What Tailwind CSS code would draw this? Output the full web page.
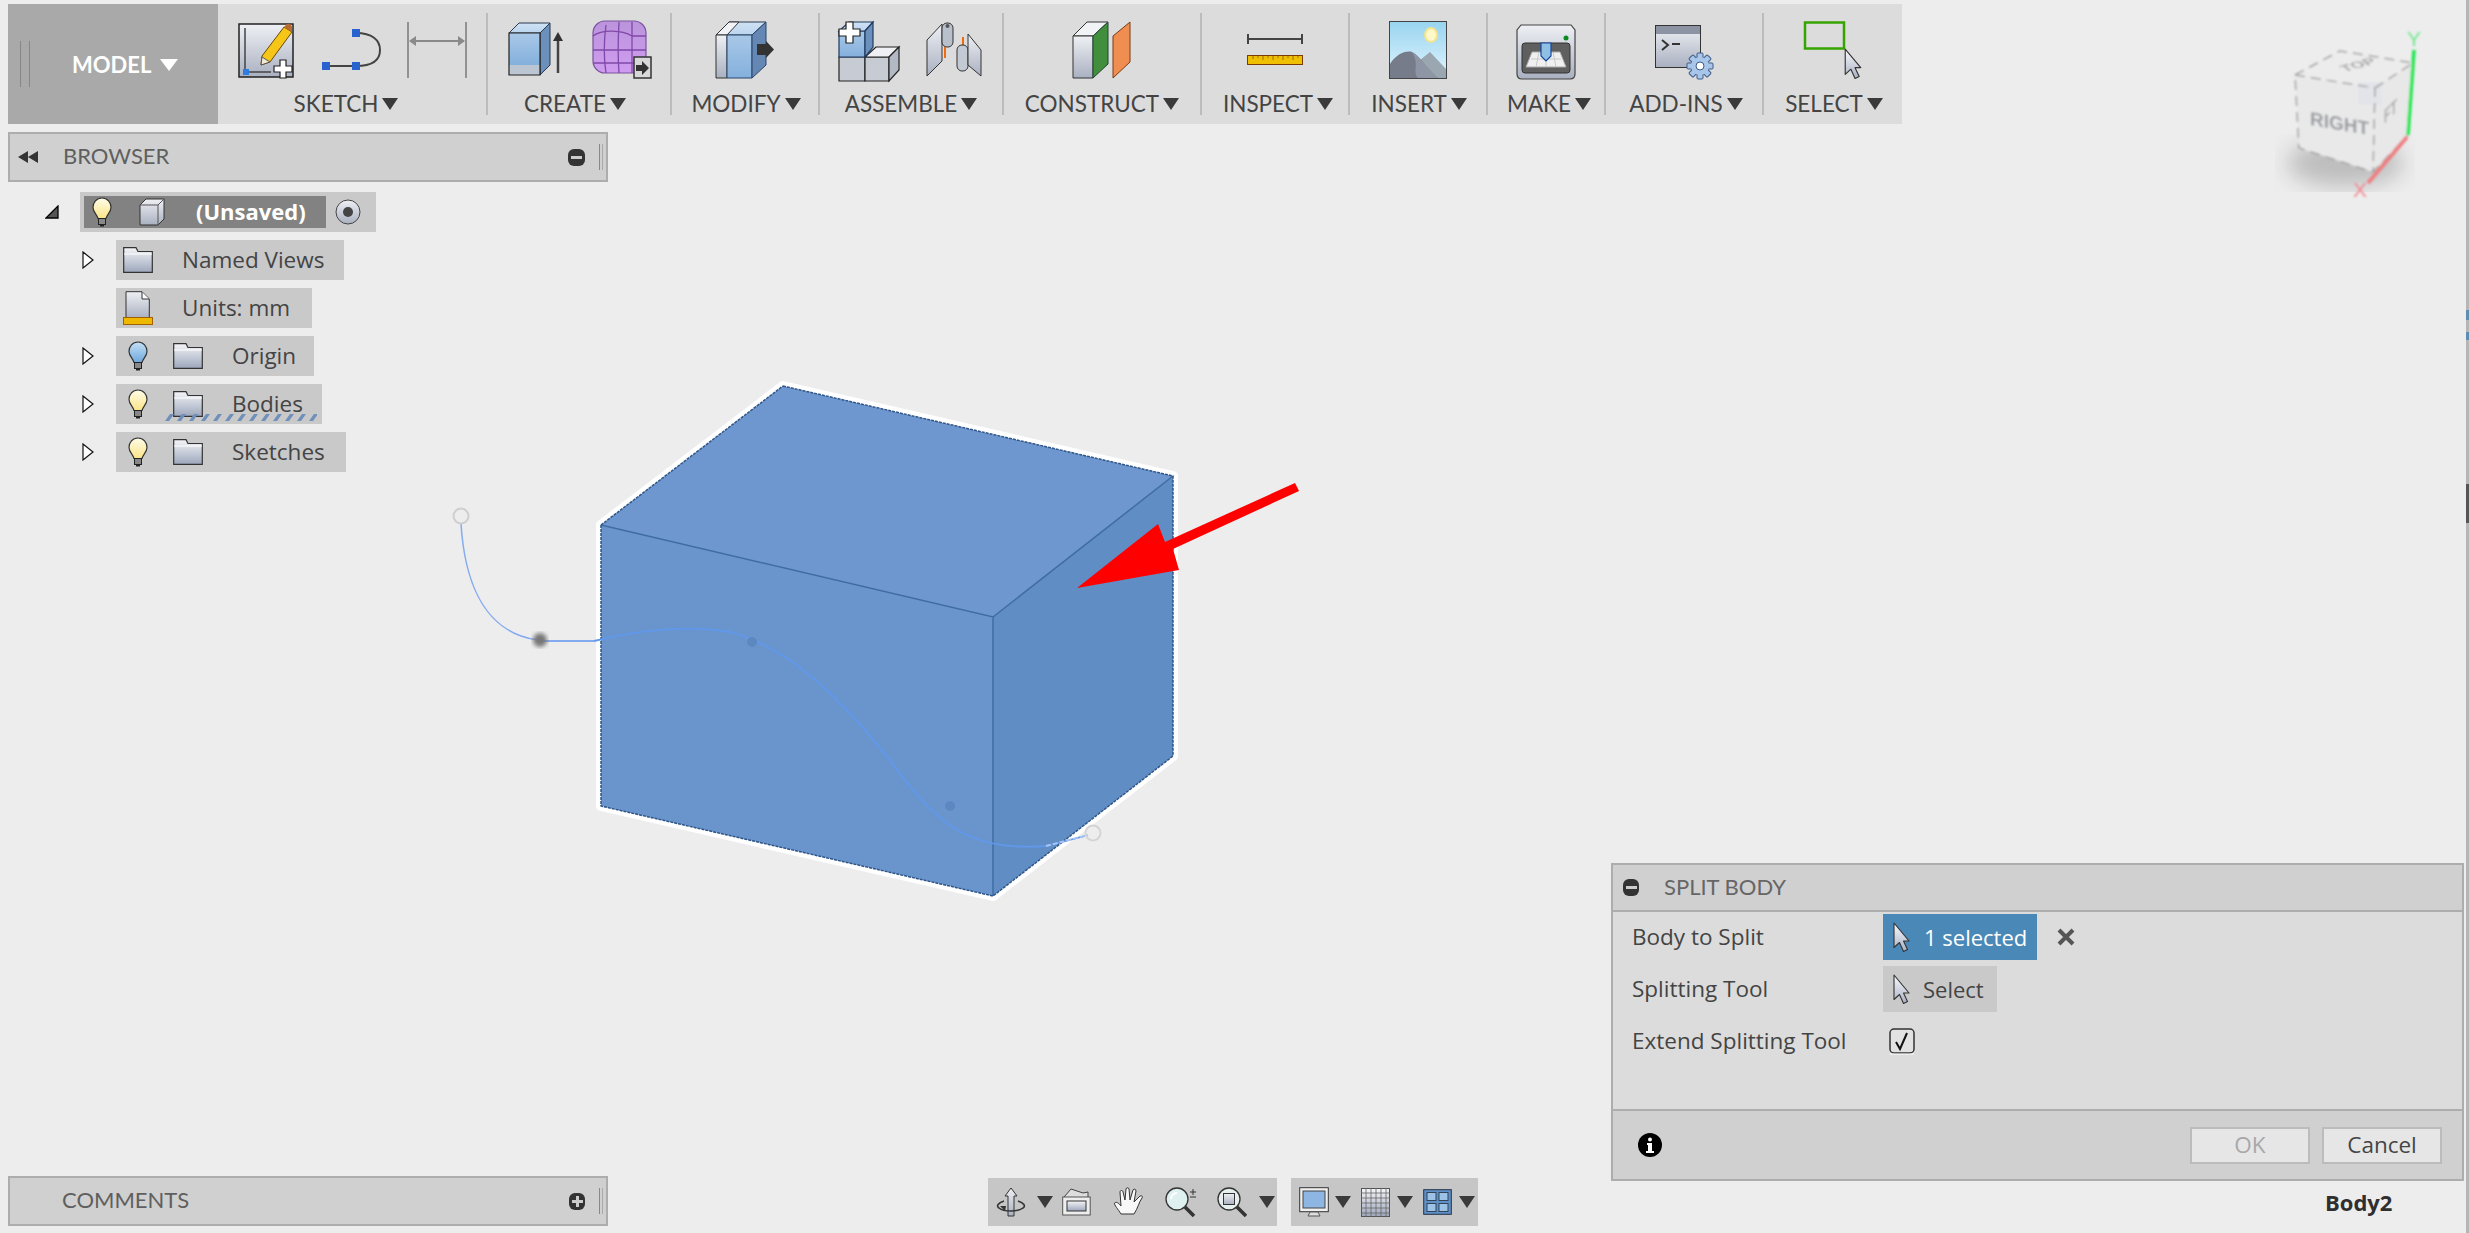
<!doctype html>
<html lang="en">
<head>
  <meta charset="UTF-8" />
  <script src="https://cdn.jsdelivr.net/npm/@tailwindcss/browser@4"></script>
  <title>Split Body</title>
</head>
<body class="relative flex flex-col w-[2469px] h-[1233px] overflow-hidden bg-[#ededed] pl-2 pt-1 pb-[7px] [font-family:Lato,sans-serif] text-[22px] text-[#444]">

  <!-- shared gradients and icons -->
  <svg class="absolute w-0 h-0">
    <defs>
      <linearGradient id="gBlue" x1="0" y1="0" x2="0" y2="1"><stop offset="0" stop-color="#a9c8e8"/><stop offset="1" stop-color="#84b0dc"/></linearGradient>
      <linearGradient id="gBlueTop" x1="0" y1="0" x2="0" y2="1"><stop offset="0" stop-color="#cfe2f5"/><stop offset="1" stop-color="#bcd5ee"/></linearGradient>
      <linearGradient id="gSteel" x1="0" y1="0" x2="0" y2="1"><stop offset="0" stop-color="#eef0f4"/><stop offset="1" stop-color="#a9b0c0"/></linearGradient>
      <linearGradient id="gFolder" x1="0" y1="0" x2="0" y2="1"><stop offset="0" stop-color="#f4f5f7"/><stop offset="1" stop-color="#9da7bc"/></linearGradient>
      <linearGradient id="gPurple" x1="0" y1="0" x2="0" y2="1"><stop offset="0" stop-color="#bb94dc"/><stop offset="1" stop-color="#cf9cf0"/></linearGradient>
      <linearGradient id="gSky" x1="0" y1="0" x2="0" y2="1"><stop offset="0" stop-color="#98d4ef"/><stop offset="1" stop-color="#e2f5fe"/></linearGradient>
      <linearGradient id="gBulbY" x1="0" y1="0" x2="0" y2="1"><stop offset="0" stop-color="#fffde8"/><stop offset="1" stop-color="#fbe488"/></linearGradient>
      <linearGradient id="gBulbB" x1="0" y1="0" x2="0" y2="1"><stop offset="0" stop-color="#c4e0f6"/><stop offset="1" stop-color="#6fa8dc"/></linearGradient>
      <linearGradient id="gCursor" x1="0" y1="0" x2="0" y2="1"><stop offset="0" stop-color="#fafbfd"/><stop offset="1" stop-color="#a8b0c4"/></linearGradient>
      <pattern id="wavy" width="12" height="10" patternUnits="userSpaceOnUse"><path d="M0 9 L5 2 L9 2 L4 9 Z" fill="#6f8fbb"/></pattern>
      <symbol id="tri" viewBox="0 0 16 12"><path d="M0 0H16L8 12Z" fill="#3a3a3a"/></symbol>
      <symbol id="arrow" viewBox="0 0 12 18"><path d="M1 1 L11 9 L1 17Z" fill="#fff" stroke="#111" stroke-width="1.2"/></symbol>
      <symbol id="bulbY" viewBox="0 0 20 30"><path d="M10 1C4.500 1 1 5.500 1 10.500C1 15 5 17.500 6 21.500H14C15 17.500 19 15 19 10.500C19 5.500 15.500 1 10 1Z" fill="url(#gBulbY)" stroke="#333" stroke-width="1.200"/><rect x="6.500" y="21.500" width="7" height="6" fill="#888" stroke="#222"/><rect x="8" y="27" width="4" height="2.500" fill="#222"/></symbol>
      <symbol id="bulbB" viewBox="0 0 20 30"><path d="M10 1C4.500 1 1 5.500 1 10.500C1 15 5 17.500 6 21.500H14C15 17.500 19 15 19 10.500C19 5.500 15.500 1 10 1Z" fill="url(#gBulbB)" stroke="#333" stroke-width="1.200"/><rect x="6.500" y="21.500" width="7" height="6" fill="#888" stroke="#222"/><rect x="8" y="27" width="4" height="2.500" fill="#222"/></symbol>
      <symbol id="folder" viewBox="0 0 30 26"><path d="M.7 25.300V.7H13L15 4.500H29.300V25.300Z" fill="url(#gFolder)" stroke="#333" stroke-width="1.200"/><path d="M1 7H29" stroke="#fff" stroke-width="1"/></symbol>
      <symbol id="cursor" viewBox="0 0 18 30"><path d="M1 1 L16 19 L10.500 19 L14.500 27.500 L10.500 29.500 L6.500 20.500 L1 25.500 Z" fill="url(#gCursor)" stroke="#333" stroke-width="1.100" stroke-linejoin="round"/></symbol>
    </defs>
  </svg>

  <!-- the model, sketch spline, annotation arrow and view cube on the canvas -->
  <svg class="absolute left-0 top-0" width="2469" height="1233" viewBox="0 0 2469 1233">
    <defs>
      <filter id="b05"><feGaussianBlur stdDeviation="0.500"/></filter>
      <filter id="b1"><feGaussianBlur stdDeviation="0.900"/></filter>
      <filter id="b8"><feGaussianBlur stdDeviation="11"/></filter>
      <filter id="b2"><feGaussianBlur stdDeviation="2"/></filter>
    </defs>
    <g filter="url(#b05)">
      <path d="M461 524C464 570 478 632 538 640" fill="none" stroke="#84aaf0" stroke-width="1.500"/>
      <path d="M538 641H594" fill="none" stroke="#84aaf0" stroke-width="2"/>
      <circle cx="461" cy="516" r="7.500" fill="none" stroke="#cfcfcf" stroke-width="2"/>
      <path d="M601 525L783 386L1173 476V756L993 896L601 806Z" fill="#6c96cd" stroke="#fff" stroke-width="10" stroke-linejoin="round"/>
      <path d="M601 525L783 386L1173 476L993 617Z" fill="#6d97ce"/>
      <path d="M601 525L993 617V896L601 806Z" fill="#6b95cc"/>
      <path d="M993 617L1173 476V756L993 896Z" fill="#608dc4"/>
      <path d="M601 525L993 617L1173 476M993 617V896" fill="none" stroke="#3f6ca3" stroke-width="1.500"/>
      <path d="M783 386L1173 476V756M601 525V806L993 896L1173 756M601 525L783 386" fill="none" stroke="#2f5688" stroke-width="1.500" stroke-dasharray="3 1"/>
      <path d="M594 641C640 630 690 625 730 632C800 650 860 720 905 780C950 840 990 850 1046 846L1085 836" fill="none" stroke="#6098ec" stroke-width="1.800"/>
      <path d="M1046 846L1088 835" fill="none" stroke="#a8c4f4" stroke-width="2" stroke-dasharray="5 2"/>
      <circle cx="752" cy="642" r="5" fill="#5c88c2"/>
      <circle cx="950" cy="806" r="5" fill="#5c88c2"/>
      <circle cx="1093" cy="833" r="7.500" fill="none" stroke="#d4d4d4" stroke-width="2"/>
    </g>
    <circle cx="540" cy="640" r="7" fill="#777" filter="url(#b2)"/>
    <path d="M1295 483L1299 491L1173 549L1179 570L1077 588L1158 524L1165 542Z" fill="#ff0000"/>

    <ellipse cx="2345" cy="163" rx="58" ry="24" fill="#000" fill-opacity="0.200" filter="url(#b8)"/>
    <g filter="url(#b1)">
      <path d="M2295 75L2340 51L2413 63L2375 88Z" fill="#ececec"/>
      <path d="M2295 75L2375 88L2373 172L2299 148Z" fill="#e9e9e9"/>
      <path d="M2375 88L2413 63L2408 135L2373 172Z" fill="#e8e8e8"/>
      <rect x="2358" y="82" width="24" height="23" fill="#e3e4ea"/>
      <path d="M2295 75L2340 51L2413 63L2408 135L2373 172L2299 148ZM2295 75L2375 88L2373 172M2375 88L2413 63" fill="none" stroke="#a2a2a2" stroke-width="1.500" stroke-dasharray="10 6"/>
      <text transform="matrix(1 .17 0 1 2310 125)" font-size="19" font-weight="700" fill="#9a9ca2" font-family="Liberation Sans">RIGHT</text>
      <text transform="matrix(.55 -.55 0 1 2384 124)" font-size="19" font-weight="700" fill="#a8a8a8" font-family="Liberation Sans">FT</text>
      <text transform="matrix(1 -.28 .6 .5 2345 72)" font-size="16" font-weight="700" fill="#a8a8a8" font-family="Liberation Sans">TOP</text>
      <path d="M2414 50L2408 135" stroke="#1fe64e" stroke-width="3.500"/>
      <path d="M2407 137L2368 183" stroke="#ef7f82" stroke-width="4"/>
      <text x="2407" y="46" font-size="21" fill="#6fe88e" font-family="Liberation Sans">Y</text>
      <text x="2353" y="197" font-size="21" fill="#f38a92" font-family="Liberation Sans">X</text>
    </g>
  </svg>

  <!-- window edge behind the page -->
  <div class="absolute right-0 top-0 flex flex-col w-[3px] h-full bg-[#b6b6b6]">
    <div class="h-[310px]"></div>
    <div class="h-[10px] bg-[#5f8fb0]"></div>
    <div class="h-[12px]"></div>
    <div class="h-[8px] bg-[#5f8fb0]"></div>
    <div class="h-[144px]"></div>
    <div class="h-[39px] bg-[#555]"></div>
  </div>

  <!-- ribbon -->
  <div class="relative flex items-center w-[1894px] h-[120px] shrink-0 bg-[#dcdcdc] text-[22.5px]">
    <div class="flex items-center w-[210px] h-full bg-[#a9a9a9] pl-3 text-[22px]">
      <div class="w-px h-[46px] bg-[#868686]"></div>
      <div class="w-px h-[46px] ml-2 bg-[#868686]"></div>
      <span class="ml-[42px] font-bold text-white">MODEL</span>
      <svg class="ml-[9px] mt-[2px]" width="18" height="12" viewBox="0 0 18 12"><path d="M0 0H18L9 12Z" fill="#fff"/></svg>
    </div>

    <!-- SKETCH -->
    <div class="flex flex-col items-center w-[268px] h-full pt-4">
      <div class="flex gap-[25px] h-[60px]">
        <svg width="60" height="60" viewBox="0 0 60 60">
          <path d="M2 4H56V57H2Z" fill="url(#gSteel)" stroke="#222" stroke-width="1.500"/>
          <path d="M8 8V52H34" fill="none" stroke="#444" stroke-width="1.500"/>
          <rect x="6" y="49" width="6" height="6" fill="#2e7de0"/>
          <path d="M25 36L47 7L55 12L33 42L24 45Z" fill="#f5c518" stroke="#6b4a00"/>
          <path d="M47 7L50 4C53 3 56 6 55 9L55 12Z" fill="#b86a30"/>
          <path d="M25 37L33 42L24 45Z" fill="#f3e8d0" stroke="#555"/>
          <path d="M43 43H49V49H55V55H49V61H43V55H37V49H43Z" fill="#fff" stroke="#222" stroke-width="1.200" transform="translate(0 -3)"/>
        </svg>
        <svg width="60" height="60" viewBox="0 0 60 60">
          <path d="M34 13C50 13 58 20 58 30C58 40 50 46 34 46H4" fill="none" stroke="#444" stroke-width="2"/>
          <rect x="30" y="9" width="8" height="8" fill="#2762ce"/><rect x="30" y="42" width="8" height="8" fill="#2762ce"/><rect x="0" y="42" width="8" height="8" fill="#2762ce"/>
        </svg>
        <svg width="60" height="60" viewBox="0 0 60 60">
          <path d="M1 2V58M59 2V58" stroke="#8a8a8a" stroke-width="1.800"/>
          <path d="M3 21H57" stroke="#8a8a8a" stroke-width="2"/>
          <path d="M2 21L9 16V26ZM58 21L51 16V26Z" fill="#8a8a8a"/>
        </svg>
      </div>
      <div class="flex items-center gap-1 mt-3 mr-3 h-6"><span>SKETCH</span><svg width="16" height="12"><use href="#tri"/></svg></div>
    </div>
    <div class="w-[2px] h-[102px] bg-[#bcbcbc]"></div>

    <!-- CREATE -->
    <div class="flex flex-col items-center w-[182px] h-full pt-4">
      <div class="flex gap-[25px] h-[60px]">
        <svg width="60" height="60" viewBox="0 0 60 60">
          <path d="M2 13L12 3H43L33 13Z" fill="url(#gBlueTop)" stroke="#2a3a50" stroke-width="1"/>
          <path d="M33 13L43 3V45L33 55Z" fill="#6c90bc" stroke="#2a3a50" stroke-width="1"/>
          <path d="M2 13H33V45H2Z" fill="url(#gBlue)"/>
          <path d="M2 45H33V55H2Z" fill="#bcc5d2"/>
          <path d="M2 13H33V55H2Z" fill="none" stroke="#222" stroke-width="1.200"/>
          <path d="M51 53V20" stroke="#444" stroke-width="2.500"/><path d="M51 12L56 21H46Z" fill="#333"/>
        </svg>
        <svg width="60" height="60" viewBox="0 0 60 60">
          <rect x="1" y="1" width="53" height="52" rx="12" fill="url(#gPurple)" stroke="#7a52a0" stroke-width="1.200"/>
          <path d="M1 16C10 9 30 10 40 16H54M1 30H54M1 43H54M14 5C12 20 12 40 14 53M27 2C26 20 26 40 27 53M40 2V53" fill="none" stroke="#8048a8" stroke-width="1.300"/>
          <rect x="42" y="37" width="17" height="21" fill="#d8d8d8" stroke="#333" stroke-width="1.500"/>
          <path d="M44 45H50V41L57 48L50 55V51H44Z" fill="#333"/>
        </svg>
      </div>
      <div class="flex items-center gap-1 mt-3 mr-2 h-6"><span>CREATE</span><svg width="16" height="12"><use href="#tri"/></svg></div>
    </div>
    <div class="w-[2px] h-[102px] bg-[#bcbcbc]"></div>

    <!-- MODIFY -->
    <div class="flex flex-col items-center w-[146px] h-full pt-4">
      <svg width="60" height="60" viewBox="0 0 60 60">
        <path d="M1 15L14 2H51L37 15Z" fill="url(#gBlueTop)" stroke="#2a3a50" stroke-width="1"/>
        <path d="M1 15L14 2H24L12 15Z" fill="#f2f3f6" stroke="#333" stroke-width="1"/>
        <path d="M1 15H12V58H1Z" fill="url(#gSteel)" stroke="#333" stroke-width="1"/>
        <path d="M12 15H37V58H12Z" fill="url(#gBlue)" stroke="#27456c" stroke-width="1"/>
        <path d="M37 15L51 2V45L37 58Z" fill="#6487b4" stroke="#27456c" stroke-width="1"/>
        <path d="M42 24H51V21L59 29.500L51 38V35H42Z" fill="#333"/>
      </svg>
      <div class="flex items-center gap-1 mt-3 ml-[2px] h-6"><span>MODIFY</span><svg width="16" height="12"><use href="#tri"/></svg></div>
    </div>
    <div class="w-[2px] h-[102px] bg-[#bcbcbc]"></div>

    <!-- ASSEMBLE -->
    <div class="flex flex-col items-center w-[182px] h-full pt-4">
      <div class="flex gap-[27px] h-[60px]">
        <svg class="overflow-visible" width="60" height="60" viewBox="0 0 60 60">
          <path d="M1 37H27V61H1Z" fill="#c7ccd4" stroke="#222" stroke-width="1.200"/>
          <path d="M27 37H51V61H27Z" fill="#c7ccd4" stroke="#222" stroke-width="1.200"/>
          <path d="M27 37L38 27H61L51 37Z" fill="#eef0f4" stroke="#222" stroke-width="1.200"/>
          <path d="M51 37L61 27V50L51 61Z" fill="#b3b9c4" stroke="#222" stroke-width="1.200"/>
          <path d="M1 11H27V37H1Z" fill="url(#gBlue)" stroke="#1f3a5f" stroke-width="1.200"/>
          <path d="M1 11L11 2H35L27 11Z" fill="url(#gBlueTop)" stroke="#1f3a5f" stroke-width="1.200"/>
          <path d="M27 11L35 2V27L27 37Z" fill="#6c90bc" stroke="#1f3a5f" stroke-width="1.200"/>
          <path d="M8 2H15V9H22V16H15V23H8V16H1V9H8Z" fill="#fff" stroke="#222" stroke-width="1.200"/>
        </svg>
        <svg width="60" height="60" viewBox="0 0 60 60">
          <path d="M2 20L17 4V41L2 56Z" fill="url(#gSteel)" stroke="#333"/>
          <rect x="17" y="3" width="11" height="24" rx="5" fill="#b8c0cc" stroke="#333"/><circle cx="22.500" cy="6" r="2" fill="#555"/>
          <path d="M20 27V38" stroke="#f06a10" stroke-width="2"/>
          <path d="M38 17V32" stroke="#f06a10" stroke-width="2"/>
          <rect x="32" y="25" width="11" height="26" rx="5" fill="#c4cad4" stroke="#333"/>
          <path d="M43 14L56 30V56L43 45Z" fill="url(#gSteel)" stroke="#333"/>
        </svg>
      </div>
      <div class="flex items-center gap-1 mt-3 h-6"><span>ASSEMBLE</span><svg width="16" height="12"><use href="#tri"/></svg></div>
    </div>
    <div class="w-[2px] h-[102px] bg-[#bcbcbc]"></div>

    <!-- CONSTRUCT -->
    <div class="flex flex-col items-center w-[196px] h-full pt-4">
      <svg width="60" height="60" viewBox="0 0 60 60">
        <path d="M1 16L15 2H36L21 16Z" fill="#f2f3f6" stroke="#333"/>
        <path d="M1 16H21V58H1Z" fill="url(#gSteel)" stroke="#333"/>
        <path d="M21 16L36 2V44L21 58Z" fill="#418f3c" stroke="#243"/>
        <path d="M41 16L58 2V42L41 58Z" fill="#ef8e50" stroke="#7a3c10"/>
      </svg>
      <div class="flex items-center gap-1 mt-3 h-6"><span>CONSTRUCT</span><svg width="16" height="12"><use href="#tri"/></svg></div>
    </div>
    <div class="w-[2px] h-[102px] bg-[#bcbcbc]"></div>

    <!-- INSPECT -->
    <div class="flex flex-col items-center w-[146px] h-full pt-4">
      <svg width="60" height="60" viewBox="0 0 60 60">
        <path d="M3 19H57M3 14V24M57 14V24" fill="none" stroke="#444" stroke-width="2"/>
        <rect x="2.500" y="35.500" width="55" height="9" fill="#efc000" stroke="#7a3c00"/>
        <path d="M8 36V39M13 36V38M18 36V40M23 36V38M28 36V40M33 36V38M38 36V40M43 36V38M48 36V40M53 36V38" stroke="#a07000"/>
      </svg>
      <div class="flex items-center gap-1 mt-3 ml-[6px] h-6"><span>INSPECT</span><svg width="16" height="12"><use href="#tri"/></svg></div>
    </div>
    <div class="w-[2px] h-[102px] bg-[#bcbcbc]"></div>

    <!-- INSERT -->
    <div class="flex flex-col items-center w-[136px] h-full pt-4">
      <svg width="60" height="60" viewBox="0 0 60 60">
        <rect x="1.500" y="1.500" width="57" height="57" fill="url(#gSky)" stroke="#444"/>
        <ellipse cx="43" cy="15" rx="6" ry="7" fill="#fff8c8" stroke="#f4e48c" stroke-width="2"/>
        <path d="M32 40L42 32L58 49V58H36Z" fill="#9aa6b0"/>
        <path d="M2 44C8 34 18 30 24 32C32 36 38 48 50 58H2Z" fill="#777c8a"/>
        <path d="M24 32C32 36 38 48 50 58H30C24 52 32 44 24 32Z" fill="#8e96a6"/>
      </svg>
      <div class="flex items-center gap-1 mt-3 ml-[2px] h-6"><span>INSERT</span><svg width="16" height="12"><use href="#tri"/></svg></div>
    </div>
    <div class="w-[2px] h-[102px] bg-[#bcbcbc]"></div>

    <!-- MAKE -->
    <div class="flex flex-col items-center w-[116px] h-full pt-4">
      <svg width="60" height="60" viewBox="0 0 60 60">
        <path d="M5 5H55L59 10V54C59 57 57 59 54 59H6C3 59 1 57 1 54V10Z" fill="url(#gSteel)" stroke="#444" stroke-width="1.200"/>
        <rect x="6" y="23" width="48" height="30" rx="3" fill="#5f5f5f" stroke="#333"/>
        <path d="M16 32H44L50 47H10Z" fill="#f0f0f0" stroke="#aaa"/>
        <path d="M15 39H45M23 32L20 47M30 32V47M37 32L40 47" stroke="#c8c8c8"/>
        <path d="M25 23H35V36L30 41L25 36Z" fill="#8fc0e4" stroke="#1446a0" stroke-width="1.200"/>
        <circle cx="50" cy="18" r="2.500" fill="#0a8a20"/>
      </svg>
      <div class="flex items-center gap-1 mt-3 ml-[6px] h-6"><span>MAKE</span><svg width="16" height="12"><use href="#tri"/></svg></div>
    </div>
    <div class="w-[2px] h-[102px] bg-[#bcbcbc]"></div>

    <!-- ADD-INS -->
    <div class="flex flex-col items-center w-[156px] h-full pt-4">
      <svg width="60" height="60" viewBox="0 0 60 60">
        <rect x="1.500" y="5.500" width="45" height="42" fill="url(#gSteel)" stroke="#333"/>
        <rect x="2" y="6" width="44" height="8" fill="#8c93a3"/>
        <path d="M8 20L14 25L8 30" fill="none" stroke="#333" stroke-width="2"/>
        <path d="M18 24H26" stroke="#333" stroke-width="2"/>
        <g transform="translate(46 46)">
          <g fill="#a8c6ea" stroke="#3c5a88">
            <rect x="-3" y="-13" width="6" height="26" rx="1"/>
            <rect x="-3" y="-13" width="6" height="26" rx="1" transform="rotate(45)"/>
            <rect x="-3" y="-13" width="6" height="26" rx="1" transform="rotate(90)"/>
            <rect x="-3" y="-13" width="6" height="26" rx="1" transform="rotate(135)"/>
          </g>
          <circle r="9" fill="#a8c6ea"/>
          <circle r="4" fill="#fff" stroke="#3c5a88"/>
        </g>
      </svg>
      <div class="flex items-center gap-1 mt-3 ml-[4px] h-6"><span>ADD-INS</span><svg width="16" height="12"><use href="#tri"/></svg></div>
    </div>
    <div class="w-[2px] h-[102px] bg-[#bcbcbc]"></div>

    <!-- SELECT -->
    <div class="flex flex-col items-center w-[138px] h-full pt-4">
      <svg width="60" height="60" viewBox="0 0 60 60">
        <rect x="2" y="2.500" width="39" height="26" fill="none" stroke="#36a400" stroke-width="2.500"/>
        <use href="#cursor" x="41" y="28" width="19" height="31"/>
      </svg>
      <div class="flex items-center gap-1 mt-3 ml-[2px] h-6"><span>SELECT</span><svg width="16" height="12"><use href="#tri"/></svg></div>
    </div>
  </div>

  <!-- browser panel -->
  <div class="relative flex items-center w-[600px] h-[50px] mt-2 shrink-0 bg-[#d0d0d0] border-2 border-[#adadad] text-[#5f5f5f]">
    <svg class="ml-[8px]" width="20" height="12" viewBox="0 0 20 12"><path d="M10 0V12L0 6ZM20 0V12L10 6Z" fill="#333"/></svg>
    <span class="ml-[25px] mb-[3px]">BROWSER</span>
    <div class="ml-auto flex items-center justify-center w-[17px] h-[17px] rounded-[6px] bg-[#333]"><div class="w-[11px] h-[3px] bg-[#ccc]"></div></div>
    <div class="ml-[14px] mr-[3px] flex gap-[2px]"><div class="w-px h-[26px] bg-[#888]"></div><div class="w-px h-[26px] bg-[#aaa]"></div></div>
  </div>

  <!-- component tree -->
  <div class="relative flex flex-col gap-2 mt-[10px] shrink-0 [font-family:Open_Sans,sans-serif] text-[22.5px]">
    <div class="flex items-center h-10">
      <svg class="ml-[37px]" width="14" height="14" viewBox="0 0 14 14"><path d="M1 13L13 1V13Z" fill="#555" stroke="#000" stroke-width="1.300"/></svg>
      <div class="flex items-center w-[296px] h-10 ml-[21px] pl-1 bg-[#c9c9c9]">
        <div class="flex items-center w-[242px] h-8 pl-2 bg-[#828282]">
          <svg width="20" height="30"><use href="#bulbY" width="20" height="30"/></svg>
          <svg class="ml-[27px]" width="26" height="28" viewBox="0 0 26 28"><path d="M1 7L7 1H25V21L19 27H1Z" fill="url(#gSteel)" stroke="#333"/><path d="M1 7H19V27M19 7L25 1" fill="none" stroke="#555"/></svg>
          <span class="ml-[31px] mb-[2px] font-bold text-[22px] text-white">(Unsaved)</span>
        </div>
        <svg class="ml-[9px]" width="26" height="26" viewBox="0 0 26 26"><circle cx="13" cy="13" r="12" fill="url(#gSteel)" stroke="#444"/><circle cx="13" cy="13" r="5" fill="#444"/></svg>
      </div>
    </div>

    <div class="flex items-center h-10 ml-[74px]">
      <svg width="12" height="18"><use href="#arrow" width="12" height="18"/></svg>
      <div class="flex items-center w-[228px] h-10 ml-[22px] pl-[7px] bg-[#c9c9c9]">
        <svg width="30" height="26"><use href="#folder" width="30" height="26"/></svg>
        <span class="ml-[29px] mb-px">Named Views</span>
      </div>
    </div>

    <div class="flex items-center h-10 ml-[74px]">
      <div class="w-[12px]"></div>
      <div class="flex items-center w-[196px] h-10 ml-[22px] pl-[7px] bg-[#c9c9c9]">
        <svg width="30" height="34" viewBox="0 0 30 34"><path d="M3 .7H19L26.300 8V27H3Z" fill="url(#gSteel)" stroke="#333"/><path d="M19 1V8H26" fill="#fff" stroke="#333"/><rect x=".5" y="26.500" width="29" height="7" fill="#efb800" stroke="#a06000"/></svg>
        <span class="ml-[29px] mb-px">Units: mm</span>
      </div>
    </div>

    <div class="flex items-center h-10 ml-[74px]">
      <svg width="12" height="18"><use href="#arrow" width="12" height="18"/></svg>
      <div class="flex items-center w-[198px] h-10 ml-[22px] pl-3 bg-[#c9c9c9]">
        <svg width="20" height="30"><use href="#bulbB" width="20" height="30"/></svg>
        <svg class="ml-[25px]" width="30" height="26"><use href="#folder" width="30" height="26"/></svg>
        <span class="ml-[29px] mb-px">Origin</span>
      </div>
    </div>

    <div class="relative flex items-center h-10 ml-[74px]">
      <svg width="12" height="18"><use href="#arrow" width="12" height="18"/></svg>
      <div class="flex items-center w-[206px] h-10 ml-[22px] pl-3 bg-[#c9c9c9]">
        <svg width="20" height="30"><use href="#bulbY" width="20" height="30"/></svg>
        <svg class="ml-[25px]" width="30" height="26"><use href="#folder" width="30" height="26"/></svg>
        <span class="ml-[29px] mb-px">Bodies</span>
      </div>
      <svg class="absolute left-[83px] top-[28px]" width="152" height="10"><rect width="152" height="10" fill="url(#wavy)"/></svg>
    </div>

    <div class="flex items-center h-10 ml-[74px]">
      <svg width="12" height="18"><use href="#arrow" width="12" height="18"/></svg>
      <div class="flex items-center w-[230px] h-10 ml-[22px] pl-3 bg-[#c9c9c9]">
        <svg width="20" height="30"><use href="#bulbY" width="20" height="30"/></svg>
        <svg class="ml-[25px]" width="30" height="26"><use href="#folder" width="30" height="26"/></svg>
        <span class="ml-[29px] mb-px">Sketches</span>
      </div>
    </div>
  </div>

  <!-- bottom strip: comments, navigation bars, status -->
  <div class="relative flex items-end mt-auto">
    <div class="flex items-center w-[600px] h-[50px] bg-[#d0d0d0] border-2 border-[#adadad] text-[#5f5f5f]">
      <span class="ml-[52px] mb-[3px]">COMMENTS</span>
      <div class="ml-auto relative flex items-center justify-center w-[16px] h-[17px] rounded-[6px] bg-[#333]">
        <div class="w-[11px] h-[3px] bg-[#ccc]"></div>
        <div class="absolute w-[3px] h-[11px] bg-[#ccc]"></div>
      </div>
      <div class="ml-[14px] mr-[3px] flex gap-[2px]"><div class="w-px h-[26px] bg-[#888]"></div><div class="w-px h-[26px] bg-[#aaa]"></div></div>
    </div>

    <div class="flex items-center w-[289px] h-12 ml-[380px] pl-2 bg-[#c6c6c6]">
      <svg width="30" height="30" viewBox="0 0 30 30">
        <path d="M15 1L21 9H18V29H12V9H9Z" fill="url(#gSteel)" stroke="#333"/>
        <path d="M8 14C2 16 0 19 3 21C8 25 22 25 27 21C30 19 28 16 22 14" fill="none" stroke="#333" stroke-width="1.600"/>
        <path d="M4 19L9 24L10 19Z" fill="#333"/>
      </svg>
      <svg class="ml-[10px]" width="18" height="12"><use href="#tri" width="18" height="12"/></svg>
      <svg class="ml-[8px]" width="29" height="28" viewBox="0 0 29 28"><path d="M2 9L9 1L21 5L26 4V9" fill="#ddd" stroke="#444"/><rect x=".7" y="9" width="27.500" height="18" fill="#eee" stroke="#555"/><rect x="5" y="13" width="19" height="10" fill="url(#gFolder)" stroke="#333"/></svg>
      <svg class="ml-[22px]" width="31" height="30" viewBox="0 0 31 30"><path d="M8 27C5 22 1 18 1.500 16C3 14.500 6 16 8 19L7 5C7 3 10 3 10 5L12 13L13 2C13 0.500 16 0.500 16 2L17 13L20 3C21 1.500 23 2 23 4L21 15L27 9C29 8 30 10 29 11C26 15 25 21 21 27Z" fill="#f8f8f8" stroke="#333"/></svg>
      <svg class="ml-[21px]" width="31" height="31" viewBox="0 0 31 31"><circle cx="12" cy="12" r="11" fill="#dff0f0" stroke="#333" stroke-width="1.300"/><path d="M6 12A6 6 0 0 1 12 6" fill="none" stroke="#fff" stroke-width="2"/><path d="M20 20L29 29" stroke="#333" stroke-width="3.500"/><path d="M25 5H31M28 2V8M25 10H31" stroke="#333" stroke-width="1"/></svg>
      <svg class="ml-[21px]" width="30" height="30" viewBox="0 0 30 30"><circle cx="12" cy="12" r="11" fill="#e6f0ee" stroke="#333" stroke-width="1.300"/><rect x="6.500" y="6.500" width="11" height="11" fill="url(#gSteel)" stroke="#333"/><path d="M20 20L29 29" stroke="#333" stroke-width="3.500"/></svg>
      <svg class="ml-[11px]" width="18" height="12"><use href="#tri" width="18" height="12"/></svg>
    </div>

    <div class="flex items-center w-[187px] h-12 ml-[14px] pl-2 bg-[#c6c6c6]">
      <svg width="30" height="31" viewBox="0 0 30 31"><rect x=".7" y=".7" width="28.600" height="24" fill="#f0f0f0" stroke="#333"/><rect x="4" y="4" width="22" height="17" fill="#8db6e2" stroke="#444"/><path d="M11 25H19L21 29H9Z" fill="#ddd" stroke="#555"/></svg>
      <svg class="ml-[5px]" width="18" height="12"><use href="#tri" width="18" height="12"/></svg>
      <svg class="ml-[9px]" width="29" height="29" viewBox="0 0 29 29"><rect x=".5" y=".5" width="28" height="28" fill="url(#gFolder)" stroke="#555"/><path d="M5 0V29M10 0V29M15 0V29M20 0V29M25 0V29M0 5H29M0 10H29M0 15H29M0 20H29M0 25H29" stroke="#666" stroke-width=".8"/></svg>
      <svg class="ml-[6px]" width="18" height="12"><use href="#tri" width="18" height="12"/></svg>
      <svg class="ml-[9px]" width="29" height="26" viewBox="0 0 29 26"><rect x=".7" y=".7" width="27.600" height="24.600" fill="#5e8fc8" stroke="#234"/><rect x="4" y="3.500" width="9" height="8" fill="#9dc2e8" stroke="#345"/><rect x="16" y="3.500" width="9" height="8" fill="#9dc2e8" stroke="#345"/><rect x="4" y="14.500" width="9" height="8" fill="#9dc2e8" stroke="#345"/><rect x="16" y="14.500" width="9" height="8" fill="#9dc2e8" stroke="#345"/></svg>
      <svg class="ml-[6px]" width="18" height="12"><use href="#tri" width="18" height="12"/></svg>
    </div>

    <span class="ml-[847px] mb-[7px] font-bold text-[#2f2f2f] [font-family:Open_Sans,sans-serif]">Body2</span>
  </div>

  <!-- Split Body dialog -->
  <div class="absolute left-[1611px] top-[863px] flex flex-col w-[853px] h-[318px] bg-[#dcdcdc] border-2 border-[#adadad] [font-family:Open_Sans,sans-serif] text-[22.5px]">
    <div class="flex items-center h-[47px] shrink-0 bg-[#d0d0d0] border-b-2 border-[#adadad] text-[#666] text-[22px]">
      <div class="flex items-center justify-center w-[16px] h-[17px] ml-[10px] rounded-[6px] bg-[#333]"><div class="w-[11px] h-[3px] bg-[#ccc]"></div></div>
      <span class="ml-[25px] mb-[3px] [font-family:Lato,sans-serif]">SPLIT BODY</span>
    </div>
    <div class="flex flex-col gap-[6px] flex-1 pt-[2px]">
      <div class="flex items-center h-[46px]">
        <span class="w-[270px] pl-[19px]">Body to Split</span>
        <div class="flex items-center w-[154px] h-[46px] pl-[10px] bg-[#4a88b8] text-white">
          <svg width="18" height="30"><use href="#cursor" width="18" height="30"/></svg>
          <span class="ml-[13px] text-[22px]">1 selected</span>
        </div>
        <svg class="ml-[19px]" width="20" height="18" viewBox="0 0 20 18"><path d="M3 2L17 16M17 2L3 16" stroke="#555" stroke-width="4"/></svg>
      </div>
      <div class="flex items-center h-[46px]">
        <span class="w-[270px] pl-[19px]">Splitting Tool</span>
        <div class="flex items-center w-[114px] h-[46px] pl-[10px] bg-[#c9c9c9]">
          <svg width="18" height="30"><use href="#cursor" width="18" height="30"/></svg>
          <span class="ml-[12px] text-[22px]">Select</span>
        </div>
      </div>
      <div class="flex items-center h-[46px]">
        <span class="w-[276px] pl-[19px]">Extend Splitting Tool</span>
        <svg width="26" height="27" viewBox="0 0 26 27"><rect x="1" y="1" width="24" height="24" rx="4" fill="#e2e2e2" stroke="#333" stroke-width="1.500"/><path d="M1 26H25" stroke="#fff"/><path d="M7 14L11 21L18 5" fill="none" stroke="#111" stroke-width="2"/></svg>
      </div>
    </div>
    <div class="flex items-center h-[70px] shrink-0 bg-[#d0d0d0] border-t-2 border-[#adadad]">
      <svg class="ml-[25px]" width="24" height="24" viewBox="0 0 24 24"><circle cx="12" cy="12" r="12" fill="#000"/><circle cx="12" cy="6.500" r="2" fill="#fff"/><path d="M9 10H14V18H16V20H8V18H10V12H9Z" fill="#fff"/></svg>
      <button class="flex items-center justify-center w-[120px] h-[37px] ml-auto bg-[#e6e6e6] border-2 border-[#bcbcbc] text-[#a8a8a8]">OK</button>
      <button class="flex items-center justify-center w-[120px] h-[37px] ml-3 mr-5 bg-[#e6e6e6] border-2 border-[#bcbcbc]">Cancel</button>
    </div>
  </div>
</body>
</html>
